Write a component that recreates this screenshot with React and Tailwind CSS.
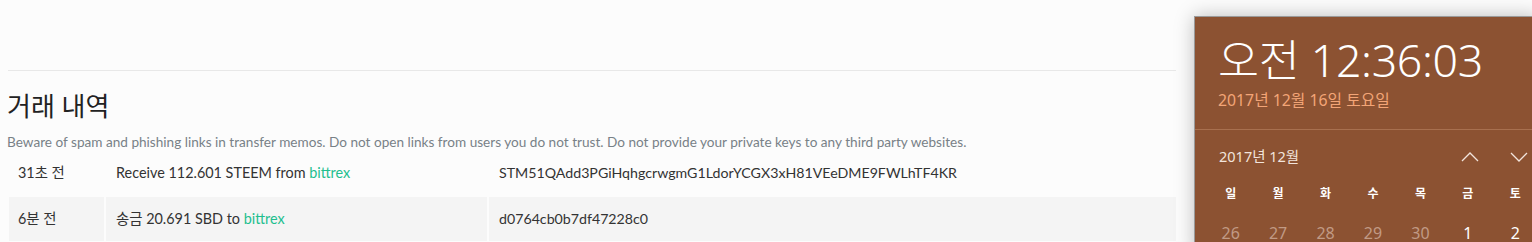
import React from "react";

const rows = [
  {
    when: "31초 전",
    what: "Receive 112.601 STEEM from ",
    who: "bittrex",
    memo: "STM51QAdd3PGiHqhgcrwgmG1LdorYCGX3xH81VEeDME9FWLhTF4KR",
  },
  {
    when: "6분 전",
    what: "송금 20.691 SBD to ",
    who: "bittrex",
    memo: "d0764cb0b7df47228c0",
  },
];

const weekDays = ["일", "월", "화", "수", "목", "금", "토"];
const firstWeek = [
  { d: 26, dim: true },
  { d: 27, dim: true },
  { d: 28, dim: true },
  { d: 29, dim: true },
  { d: 30, dim: true },
  { d: 1 },
  { d: 2 },
];

const sans = {
  fontFamily: '"Source Sans Pro", Lato, "Noto Sans CJK KR", sans-serif',
};
const win = {
  fontFamily: '"Noto Sans", "Noto Sans CJK KR", sans-serif',
};

const CalendarFlyout = () => (
  <div
    className="absolute left-[1194px] top-[16px] w-[345px] h-[240px] bg-[#8c5232] border-l border-t border-[#9a9a9a] shadow-[0_0_18px_rgba(0,0,0,0.25)]"
    style={win}
  >
    <div className="h-[113px] pl-[23px] pt-[15px] border-b border-[#a8704f]">
      <div className="text-[44.6px] leading-[56px] font-light text-white tracking-[-0.3px]">
        오전 12:36:03
      </div>
      <div className="text-[15.8px] leading-[20px] text-[#f3a577] mt-[2px]">
        2017년 12월 16일 토요일
      </div>
    </div>
    <div className="pl-[24px] pt-[16px]">
      <div className="flex items-center h-[22px]">
        <span className="text-[14.5px] text-[#f2e4dc]">2017년 12월</span>
        <svg
          className="ml-[162px]"
          width="18"
          height="10"
          viewBox="0 0 18 10"
          fill="none"
          stroke="#f2e4dc"
          strokeWidth="1.3"
        >
          <path d="M1 9 L9 1 L17 9" />
        </svg>
        <svg
          className="ml-[31px]"
          width="18"
          height="10"
          viewBox="0 0 18 10"
          fill="none"
          stroke="#f2e4dc"
          strokeWidth="1.3"
        >
          <path d="M1 1 L9 9 L17 1" />
        </svg>
      </div>
      <div className="flex -ml-[12px] mt-[16px]">
        {weekDays.map((w) => (
          <div
            key={w}
            className="w-[48px] text-center text-[12px] font-bold text-white leading-[20px]"
          >
            {w}
          </div>
        ))}
      </div>
      <div className="flex -ml-[12px] mt-[18px]">
        {firstWeek.map((c) => (
          <div
            key={c.d}
            className={`w-[48px] text-center text-[16px] leading-[22px] ${
              c.dim ? "text-[#c19a85]" : "text-white"
            }`}
          >
            {c.d}
          </div>
        ))}
      </div>
    </div>
  </div>
);

export default function App() {
  return (
    <div className="relative w-[1532px] h-[242px] overflow-hidden bg-[#fcfcfc]" style={sans}>
      <div className="w-[1168px] ml-[8px] pt-[70px]">
        <div className="border-t border-[#e8e8e8]" />
        <h2 className="text-[26px] leading-[34px] text-[#222] mt-[18px] -ml-[1px] font-normal">
          거래 내역
        </h2>
        <p className="text-[13.6px] leading-[18px] text-[#788187] mt-[10px] -ml-[1px]">
          Beware of spam and phishing links in transfer memos. Do not open links
          from users you do not trust. Do not provide your private keys to any
          third party websites.
        </p>
        <table className="w-[1171px] border-separate border-spacing-x-[2px] border-spacing-y-[2px] -ml-[1px] text-[14.4px] text-[#333] mt-[-2px]">
          <tbody>
            {rows.map((r, i) => (
              <tr key={i} className={i % 2 ? "bg-[#f4f4f4]" : ""}>
                <td className="w-[95px] h-[44px] pl-[9px]">{r.when}</td>
                <td className="w-[381px] pl-[10px]">
                  {r.what}
                  <span className="text-[#1fbf8f]">{r.who}</span>
                </td>
                <td className="pl-[10px] text-[14.2px]">{r.memo}</td>
              </tr>
            ))}
          </tbody>
        </table>
      </div>
      <CalendarFlyout />
    </div>
  );
}
